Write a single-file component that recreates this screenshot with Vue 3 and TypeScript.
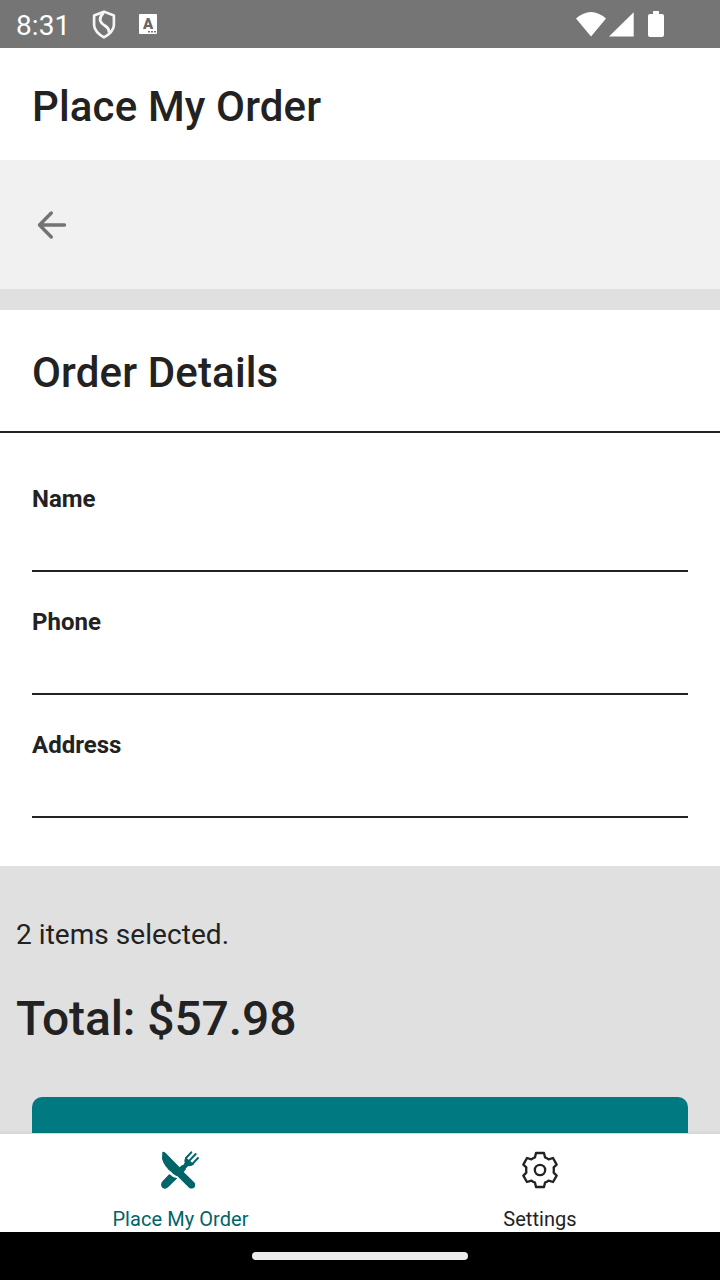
<script setup lang="ts">
interface Field {
  id: string
  label: string
}

const fields: Field[] = [
  { id: 'name', label: 'Name' },
  { id: 'phone', label: 'Phone' },
  { id: 'address', label: 'Address' },
]
const itemCount = 2
const total = 57.98
</script>

<template>
  <div class="screen">
    <header class="status">
      <span class="clock">8:31</span>
      <svg class="shield" viewBox="0 0 90 100" width="30" height="33">
        <path d="M45 14 L75 26 V56 Q73 77 45 92 Q17 77 15 56 V26 Z" fill="none" stroke="#f5f5f5" stroke-width="8" stroke-linejoin="round" />
        <path d="M44 17 Q31 30 34 42 Q37 51 48 57 Q62 66 60 78" fill="none" stroke="#f5f5f5" stroke-width="9" />
      </svg>
      <div class="badge">
        <span class="badge-letter">A</span>
        <svg class="dots" viewBox="0 0 8 2" width="8" height="2"><path d="M0 0h2v1.6H0z M3 0h2v1.6H3z M6 0h2v1.6H6z" fill="#757575" /></svg>
      </div>
      <svg class="signals" viewBox="0 0 90 30" width="90" height="30">
        <path d="M0 9.5 Q15-3.5 30 9.5 L15 27.5 Z M57.7 3.3 V27.6 H33 Z" fill="#fff" />
        <path d="M77 2 h6 v3 h3 q2 0 2 2 v19 q0 2-2 2 h-12 q-2 0-2-2 V7 q0-2 2-2 h3z" fill="#fff" />
      </svg>
    </header>

    <h1 class="title">Place My Order</h1>

    <main class="content">
      <div class="back-row">
        <svg viewBox="0 0 40 40" width="40" height="40">
          <path d="M31.3 8 L19.5 20 L31.3 32 M19.5 20 H44.5" fill="none" stroke="#737373" stroke-width="3.4" stroke-linecap="round" stroke-linejoin="round" />
        </svg>
      </div>
      <section class="card">
        <h2 class="card-title">Order Details</h2>
        <form class="fields" @submit.prevent>
          <div v-for="field in fields" :key="field.id" class="field">
            <label :for="field.id">{{ field.label }}</label>
            <input :id="field.id" type="text" />
          </div>
        </form>
      </section>
      <section class="summary">
        <p class="count">{{ itemCount }} items selected.</p>
        <p class="total">Total: ${{ total.toFixed(2) }}</p>
        <button class="submit" type="button" aria-label="Place order"></button>
      </section>
    </main>

    <nav class="tabs">
      <a class="tab active">
        <svg viewBox="0 12 240 198" width="80" height="66">
          <path d="M67 66 Q71 64 77 69 L119 112 Q125 104 130 105 L134 98 Q131 89 138 81 L144 88 L157 98 L163 102 Q156 110 145 108 L138 115 Q138 122 131 126 L164 158 Q168 166 164 172 Q156 179 147 173 L117 143 Q113 137 108 137 Q98 133 95 127 Q74 112 66 87 Z" fill="#006468" />
          <path d="M154 67 L138 84 M167 72 L148 92 M174 84 L158 101" fill="none" stroke="#006468" stroke-width="6" stroke-linecap="round" />
          <path d="M86 134 Q89 131 92 135 Q99 144 112 145 L85 171 Q76 180 67 173 Q60 165 66 155 Z" fill="#006468" />
        </svg>
        <span>Place My Order</span>
      </a>
      <a class="tab">
        <svg viewBox="0 12 240 198" width="80" height="66">
          <path d="M108 69 H132 L135 82 Q141 84 146 88 L159 84 L170 104 L161 112 Q162 120 161 128 L170 137 L159 156 L146 152 Q141 156 135 158 L132 171 H108 L105 158 Q99 156 94 152 L81 156 L70 137 L79 128 Q78 120 79 112 L70 104 L81 84 L94 88 Q99 84 105 82 Z" fill="none" stroke="#222" stroke-width="7" stroke-linejoin="round" />
          <circle cx="120" cy="120" r="15.5" fill="none" stroke="#222" stroke-width="7" />
        </svg>
        <span>Settings</span>
      </a>
    </nav>
    <footer class="gesture"><div class="pill"></div></footer>
  </div>
</template>

<style>
html,
body {
  margin: 0;
  background: #000;
}
</style>

<style scoped>
* {
  box-sizing: border-box;
}
.screen {
  width: 720px;
  height: 1280px;
  overflow: hidden;
  display: flex;
  flex-direction: column;
  font-family: Roboto, "Liberation Sans", sans-serif;
  color: #222;
  background: #e0e0e0;
}
.status {
  flex: none;
  height: 48px;
  display: flex;
  align-items: center;
  padding: 0 54px 0 16px;
  background: #757575;
  color: #fff;
}
.clock {
  width: 73px;
  font-size: 28px;
  line-height: 28px;
  margin-top: 4px;
  letter-spacing: 0.1px;
}
.shield {
  flex: none;
  margin-top: -2px;
}
.badge {
  width: 18px;
  height: 20px;
  margin-left: 20px;
  border-radius: 1px;
  background: #fff;
  display: flex;
  flex-direction: column;
  align-items: center;
}
.badge-letter {
  font-size: 15px;
  line-height: 15px;
  height: 17px;
  padding-top: 3px;
  font-weight: 900;
  color: #666;
}
.dots {
  align-self: flex-end;
  margin-right: 1px;
}
.signals {
  margin-left: auto;
}
.title {
  flex: none;
  height: 112px;
  margin: 0;
  padding: 0 32px;
  background: #fff;
  font-size: 42px;
  font-weight: 500;
  line-height: 118px;
  letter-spacing: 0.15px;
}
.content {
  flex: 1 1 0;
  min-height: 0;
  overflow: hidden;
}
.back-row {
  height: 129px;
  padding: 45px 20px;
  background: #f1f1f1;
}
.back-row svg {
  overflow: visible;
}
.card {
  margin-top: 21px;
  height: 556px;
  background: #fff;
}
.card-title {
  margin: 0;
  height: 123px;
  padding: 1px 32px 0;
  border-bottom: 2px solid #222;
  font-size: 42px;
  font-weight: 500;
  line-height: 123px;
  letter-spacing: 0.15px;
}
.fields {
  padding: 16px 32px 0;
}
.field {
  height: 123px;
  display: flex;
  flex-direction: column;
  padding-top: 36px;
}
.field label {
  font-size: 24px;
  font-weight: 700;
  line-height: 28px;
}
.field input {
  width: 100%;
  height: 59px;
  padding: 0;
  border: 0;
  border-bottom: 2px solid #222;
  outline: none;
  background: transparent;
  font: 28px Roboto, sans-serif;
}
.summary {
  padding: 49px 16px 0;
}
.count {
  margin: 0;
  font-size: 28px;
  line-height: 40px;
  letter-spacing: 0.05px;
}
.total {
  margin: 32px 0 0;
  font-size: 48px;
  font-weight: 500;
  line-height: 64px;
  letter-spacing: -0.1px;
}
.submit {
  display: block;
  width: 656px;
  height: 80px;
  margin: 46px 16px 0;
  border: 0;
  border-radius: 10px;
  background: #007a80;
}
.tabs {
  flex: none;
  height: 99px;
  display: flex;
  border-top: 1px solid #d8d8d8;
  background: #fff;
  z-index: 1;
  box-shadow: 0 -1px 3px rgba(0, 0, 0, 0.05);
}
.tab {
  flex: 1;
  display: flex;
  flex-direction: column;
  align-items: center;
  font-size: 20px;
  line-height: 24px;
  letter-spacing: 0.06px;
}
.tab span {
  margin-top: 7px;
}
.active {
  color: #006468;
}
.active span {
  padding-left: 1px;
}
.gesture {
  flex: none;
  height: 48px;
  display: flex;
  align-items: center;
  justify-content: center;
  background: #000;
}
.pill {
  width: 216px;
  height: 8px;
  border-radius: 4px;
  background: #ebebeb;
}
</style>
